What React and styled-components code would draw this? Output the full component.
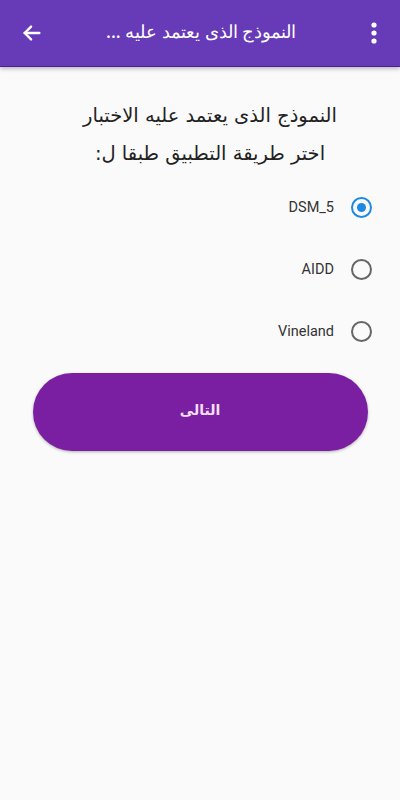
import styled, { createGlobalStyle } from 'styled-components';

const GlobalStyle = createGlobalStyle`
  html, body {
    margin: 0;
    padding: 0;
    background: #fafafa;
  }
  body {
    font-family: 'Noto Sans', 'DejaVu Sans', sans-serif;
  }
`;

const Screen = styled.div`
  width: 400px;
  height: 800px;
  background: #fafafa;
  display: flex;
  flex-direction: column;
`;

const Toolbar = styled.header`
  height: 66px;
  background: #673ab7;
  display: flex;
  align-items: center;
  padding: 0 12px 0 18px;
  box-shadow: 0 2px 4px rgba(0, 0, 0, 0.25);
  border-bottom: 1px solid #4a1f9a;
`;

const IconButton = styled.button`
  width: 28px;
  height: 28px;
  border: none;
  background: none;
  padding: 0;
  display: flex;
  align-items: center;
  justify-content: center;
  color: #fff;
`;

const ToolbarTitle = styled.h1`
  flex: 1;
  margin: 0 0 4px 0;
  padding-left: 60px;
  font-family: 'Noto Sans', sans-serif;
  font-size: 18px;
  font-weight: 500;
  color: #fff;
  direction: rtl;
  text-align: left;
`;

const Content = styled.main`
  display: flex;
  flex-direction: column;
  align-items: center;
  padding-top: 30px;
`;

const Question = styled.p`
  margin: 0;
  direction: rtl;
  text-align: center;
  font-family: 'DejaVu Sans', sans-serif;
  font-size: 19.5px;
  line-height: 38px;
  color: #222;
  transform: translateX(10px);
`;

const Options = styled.div`
  align-self: stretch;
  display: flex;
  flex-direction: column;
  gap: 30px;
  padding: 18px 28px 0 0;
`;

const Option = styled.label`
  display: flex;
  justify-content: flex-end;
  align-items: center;
  gap: 17px;
  height: 32px;
  font-family: 'Roboto', sans-serif;
  font-size: 14.5px;
  color: #333;
`;

const Radio = styled.span`
  width: 17px;
  height: 17px;
  border-radius: 50%;
  border: 2px solid ${(p) => (p.checked ? '#1e88e5' : '#666')};
  display: flex;
  align-items: center;
  justify-content: center;

  &::after {
    content: '';
    width: 9px;
    height: 9px;
    border-radius: 50%;
    background: ${(p) => (p.checked ? '#1e88e5' : 'transparent')};
  }
`;

const NextButton = styled.button`
  margin-top: 26px;
  width: 335px;
  height: 78px;
  border: none;
  border-radius: 39px;
  background: #7b1fa2;
  box-shadow: 0 1px 3px rgba(0, 0, 0, 0.3);
  color: #f3e0f7;
  font-family: 'DejaVu Sans', sans-serif;
  font-size: 14px;
  font-weight: bold;
  direction: rtl;
  padding-bottom: 6px;
`;

const BackArrow = () => (
  <svg width="22" height="22" viewBox="0 0 24 24" fill="none" stroke="#fff" strokeWidth="2.6" strokeLinecap="round" strokeLinejoin="round">
    <path d="M20 12H4" />
    <path d="M11 5l-7 7 7 7" />
  </svg>
);

const Kebab = () => (
  <svg width="8" height="24" viewBox="0 0 8 24" fill="#fff">
    <circle cx="4" cy="4" r="2.6" />
    <circle cx="4" cy="12" r="2.6" />
    <circle cx="4" cy="20" r="2.6" />
  </svg>
);

const options = [
  { label: 'DSM_5', checked: true },
  { label: 'AIDD', checked: false },
  { label: 'Vineland', checked: false },
];

export default function App() {
  return (
    <>
      <GlobalStyle />
      <Screen>
        <Toolbar>
          <IconButton aria-label="back">
            <BackArrow />
          </IconButton>
          <ToolbarTitle>النموذج الذى يعتمد عليه ...</ToolbarTitle>
          <IconButton aria-label="more">
            <Kebab />
          </IconButton>
        </Toolbar>
        <Content>
          <Question>
            النموذج الذى يعتمد عليه الاختبار
            <br />
            اختر طريقة التطبيق طبقا ل:
          </Question>
          <Options>
            {options.map((o) => (
              <Option key={o.label}>
                {o.label}
                <Radio checked={o.checked} />
              </Option>
            ))}
          </Options>
          <NextButton>التالى</NextButton>
        </Content>
      </Screen>
    </>
  );
}
